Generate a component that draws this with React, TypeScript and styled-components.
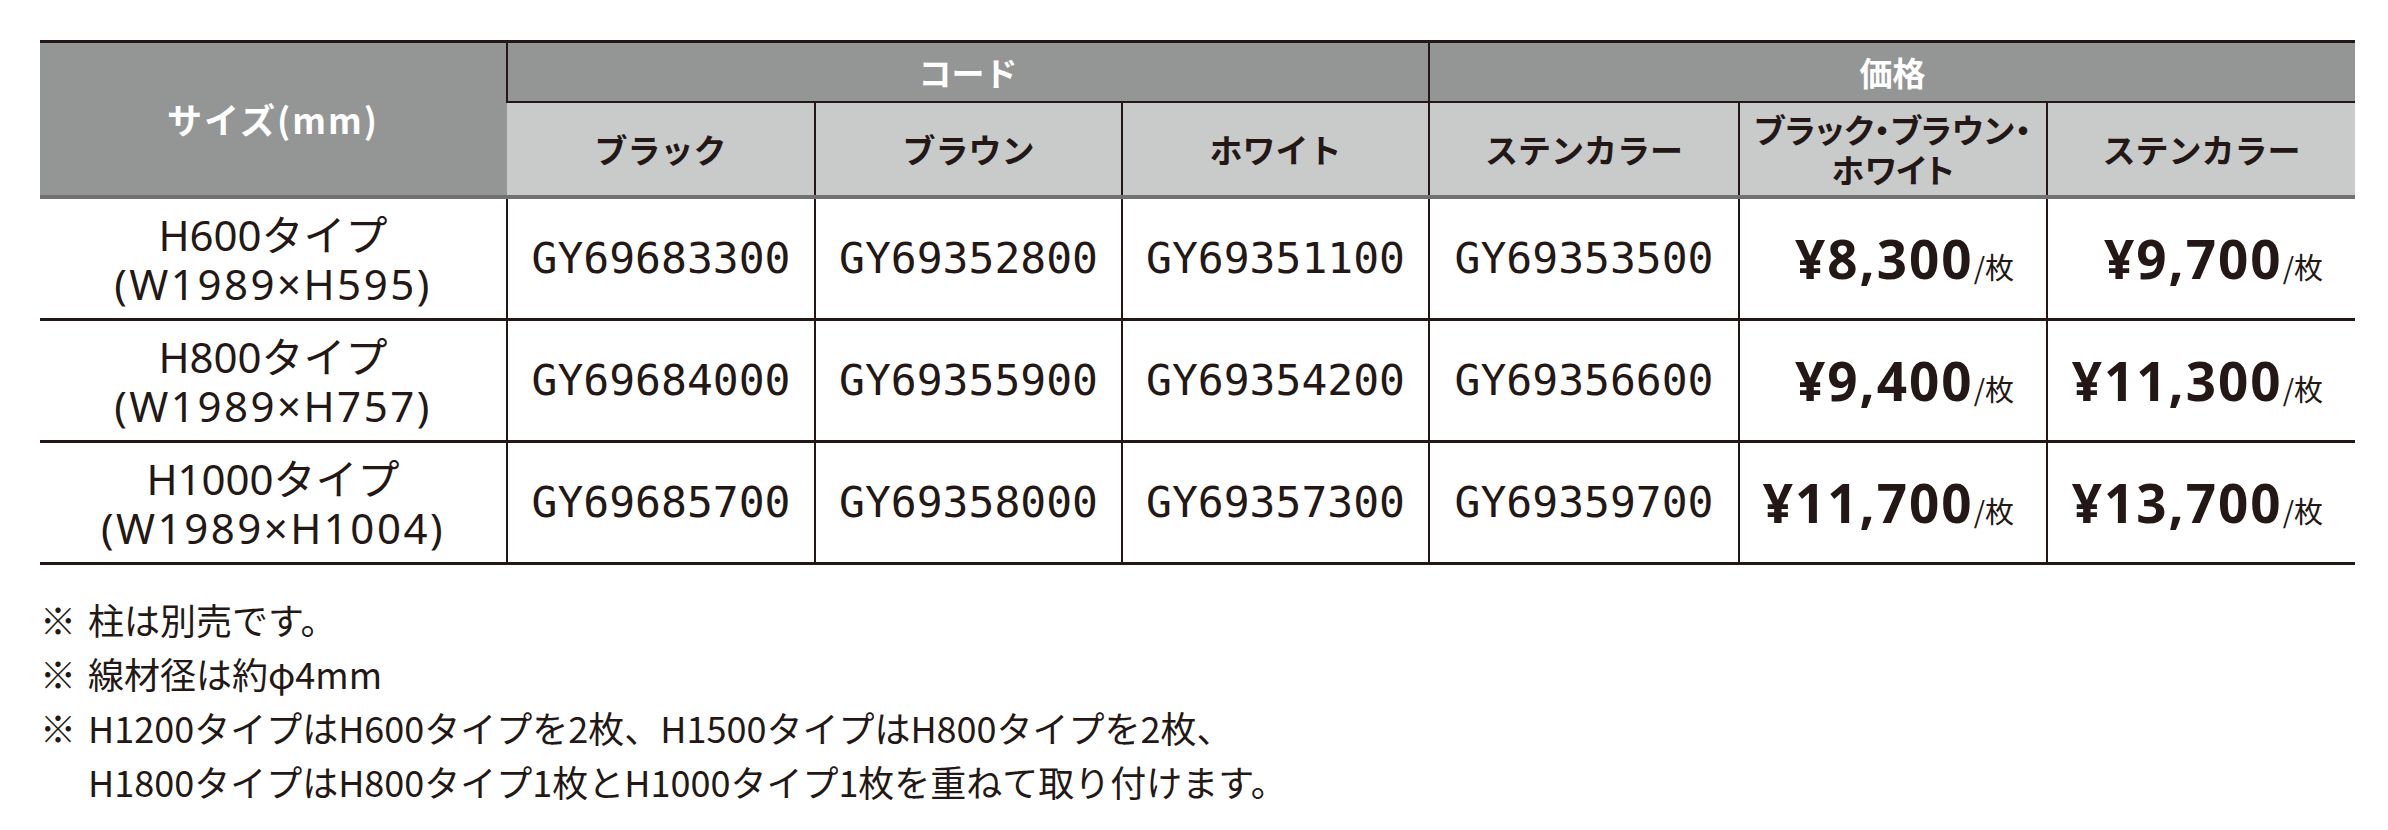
import React from "react";
import styled, { createGlobalStyle } from "styled-components";

interface configRow {
    size: string;
    dims: string;
    codes: string[];
    prices: string[];
}

const rows: configRow[] = [
    { size: "H600タイプ", dims: "W1989×H595", codes: ["GY69683300", "GY69352800", "GY69351100", "GY69353500"], prices: ["¥8,300", "¥9,700"] },
    { size: "H800タイプ", dims: "W1989×H757", codes: ["GY69684000", "GY69355900", "GY69354200", "GY69356600"], prices: ["¥9,400", "¥11,300"] },
    { size: "H1000タイプ", dims: "W1989×H1004", codes: ["GY69685700", "GY69358000", "GY69357300", "GY69359700"], prices: ["¥11,700", "¥13,700"] },
];

const INK = "#231815";
const DARK_GRAY = "#949695";
const LIGHT_GRAY = "#c9caca";
const RULE_GRAY = "#727171";

const GlobalStyle = createGlobalStyle`
    html, body {
        margin: 0;
        padding: 0;
        background: #ffffff;
    }
    body {
        font-family: "Noto Sans CJK JP", "Noto Sans", sans-serif;
        color: ${INK};
    }
`;

const Page = styled.div`
    width: 2388px;
    height: 830px;
    box-sizing: border-box;
    padding: 40px 0 0 40px;
    overflow: hidden;
`;

const Table = styled.table`
    width: 2315px;
    table-layout: fixed;
    border-collapse: collapse;
    border-top: 3px solid ${INK};
`;

const HeadCell = styled.th<{ $tone: "dark" | "light"; $tall?: boolean; $tight?: boolean }>`
    padding: 0;
    font-weight: 700;
    font-size: 33px;
    line-height: 40px;
    text-align: center;
    vertical-align: middle;
    white-space: nowrap;
    background: ${p => (p.$tone === "dark" ? DARK_GRAY : LIGHT_GRAY)};
    color: ${p => (p.$tone === "dark" ? "#ffffff" : INK)};
    height: ${p => (p.$tall ? "92px" : "58px")};
    border-left: 2px solid ${INK};
    border-bottom: ${p => (p.$tall || p.$tone === "light" ? `4px solid ${RULE_GRAY}` : `2px solid ${INK}`)};
    font-feature-settings: ${p => (p.$tight ? '"palt"' : "normal")};
    letter-spacing: ${p => (p.$tight ? "0.5px" : "0")};

    &:first-child {
        border-left: none;
    }
`;

const SizeTitle = styled.span`
    font-size: 35px;
    letter-spacing: 2px;
`;

const Row = styled.tr`
    height: 122px;
    border-bottom: 3px solid ${INK};
`;

const Cell = styled.td`
    padding: 0;
    text-align: center;
    vertical-align: middle;
    border-left: 2px solid ${INK};

    &:first-child {
        border-left: none;
    }
`;

const SizeName = styled.div<{ $spaced?: boolean }>`
    font-family: "Noto Sans", "Noto Sans CJK JP", sans-serif;
    font-size: 42px;
    line-height: 49px;
    font-weight: 400;
    white-space: nowrap;
    letter-spacing: ${p => (p.$spaced ? "2.5px" : "0")};
`;

const Kana = styled.span`
    font-family: "Noto Sans CJK JP", sans-serif;
`;

const Code = styled.span`
    font-family: "DejaVu Sans Mono", "Liberation Mono", monospace;
    font-size: 43px;
`;

const PriceCell = styled(Cell)`
    text-align: right;
    padding-right: 32px;
    white-space: nowrap;
`;

const Amount = styled.span`
    font-family: "Noto Sans", "Noto Sans CJK JP", sans-serif;
    font-weight: 700;
    font-size: 53px;
    letter-spacing: 2px;
`;

const Unit = styled.span`
    font-size: 29px;
    font-weight: 400;
`;

const Notes = styled.div`
    margin-top: 27px;
    font-size: 36px;
    line-height: 54px;
`;

const Note = styled.div`
    display: flex;
    white-space: nowrap;
`;

const Mark = styled.span`
    flex: 0 0 48px;
`;

const Price: React.FC<{ value: string }> = ({ value }) => {
    return <PriceCell>
        <Amount>{ value }</Amount><Unit>/枚</Unit>
    </PriceCell>;
};

// "H600タイプ" -> latin part in Noto Sans, katakana in the CJK face
const SizeLabel: React.FC<{ text: string }> = ({ text }) => {
    const match = text.match(/^([A-Za-z0-9]+)(.*)$/);
    if (!match) return <SizeName>{ text }</SizeName>;
    return <SizeName>{ match[1] }<Kana>{ match[2] }</Kana></SizeName>;
};

const Dims: React.FC<{ text: string }> = ({ text }) => {
    return <SizeName $spaced>({ text })</SizeName>;
};

const App: React.FC = () => {
    return <>
        <GlobalStyle />
        <Page>
            <Table>
                <colgroup>
                    <col style={{ width: "467px" }} />
                    <col style={{ width: "308px" }} />
                    <col style={{ width: "307px" }} />
                    <col style={{ width: "307px" }} />
                    <col style={{ width: "310px" }} />
                    <col style={{ width: "308px" }} />
                    <col style={{ width: "308px" }} />
                </colgroup>
                <thead>
                    <tr>
                        <HeadCell $tone="dark" rowSpan={2} $tall><SizeTitle>サイズ(mm)</SizeTitle></HeadCell>
                        <HeadCell $tone="dark" colSpan={3}>コード</HeadCell>
                        <HeadCell $tone="dark" colSpan={3}>価格</HeadCell>
                    </tr>
                    <tr>
                        <HeadCell $tone="light" $tall>ブラック</HeadCell>
                        <HeadCell $tone="light" $tall>ブラウン</HeadCell>
                        <HeadCell $tone="light" $tall>ホワイト</HeadCell>
                        <HeadCell $tone="light" $tall>ステンカラー</HeadCell>
                        <HeadCell $tone="light" $tall $tight>ブラック・ブラウン・<br />ホワイト</HeadCell>
                        <HeadCell $tone="light" $tall>ステンカラー</HeadCell>
                    </tr>
                </thead>
                <tbody>
                    { rows.map((row, index) => (
                        <Row key={index}>
                            <Cell>
                                <SizeLabel text={row.size} />
                                <Dims text={row.dims} />
                            </Cell>
                            { row.codes.map(code => (
                                <Cell key={code}><Code>{ code }</Code></Cell>
                            )) }
                            { row.prices.map((price, i) => (
                                <Price key={i} value={price} />
                            )) }
                        </Row>
                    )) }
                </tbody>
            </Table>
            <Notes>
                <Note><Mark>※</Mark><span>柱は別売です。</span></Note>
                <Note><Mark>※</Mark><span>線材径は約φ4mm</span></Note>
                <Note>
                    <Mark>※</Mark>
                    <span>
                        H1200タイプはH600タイプを2枚、H1500タイプはH800タイプを2枚、<br />
                        H1800タイプはH800タイプ1枚とH1000タイプ1枚を重ねて取り付けます。
                    </span>
                </Note>
            </Notes>
        </Page>
    </>;
};

export default App;
